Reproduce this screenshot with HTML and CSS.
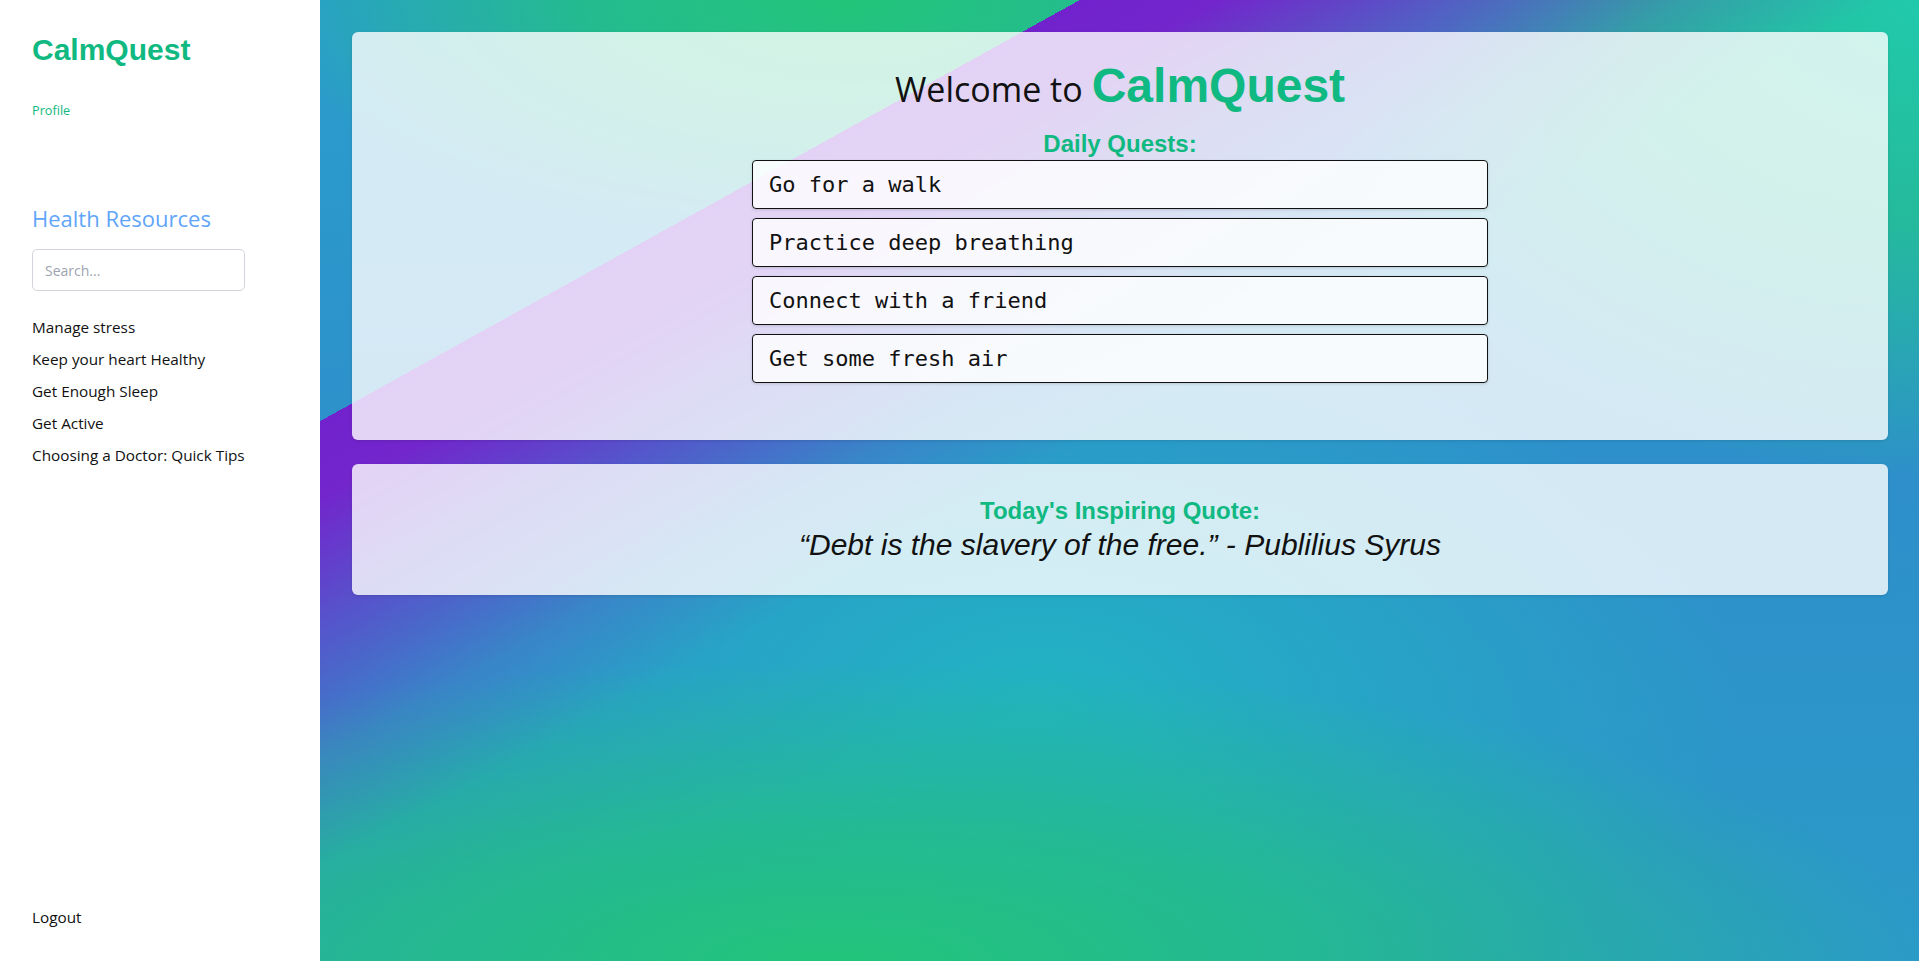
FILE: index.html
```html
<!DOCTYPE html>
<html lang="en">
<head>
<meta charset="utf-8">
<title>CalmQuest</title>
<link rel="stylesheet" href="styles.css">
</head>
<body>
<div class="app">
  <aside class="sidebar">
    <div class="brand">CalmQuest</div>
    <a class="profile" href="#">Profile</a>
    <h2 class="res-title">Health Resources</h2>
    <input class="search" type="text" placeholder="Search...">
    <ul class="res-list">
      <li><a href="#">Manage stress</a></li>
      <li><a href="#">Keep your heart Healthy</a></li>
      <li><a href="#">Get Enough Sleep</a></li>
      <li><a href="#">Get Active</a></li>
      <li><a href="#">Choosing a Doctor: Quick Tips</a></li>
    </ul>
    <a class="logout" href="#">Logout</a>
  </aside>
  <main class="main">
    <section class="card card-quests">
      <h1 class="title"><span class="welcome">Welcome to</span><span class="title-brand">CalmQuest</span></h1>
      <h2 class="subhead">Daily Quests:</h2>
      <ul class="quests">
        <li class="quest">Go for a walk</li>
        <li class="quest">Practice deep breathing</li>
        <li class="quest">Connect with a friend</li>
        <li class="quest">Get some fresh air</li>
      </ul>
    </section>
    <section class="card card-quote">
      <h2 class="subhead">Today's Inspiring Quote:</h2>
      <p class="quote">“Debt is the slavery of the free.” - Publilius Syrus</p>
    </section>
  </main>
</div>
</body>
</html>
```
FILE: styles.css
```css
* { box-sizing: border-box; }
html, body { margin: 0; padding: 0; height: 100%; }
body {
  font-family: "Open Sans", "Noto Sans", sans-serif;
  color: #111;
  overflow: hidden;
}
.app {
  display: flex;
  height: 100vh;
}
.sidebar {
  width: 320px;
  flex: 0 0 320px;
  background: #fff;
  display: flex;
  flex-direction: column;
  align-items: flex-start;
  padding: 32px 32px 34px 32px;
}
.brand {
  font-family: "Liberation Sans", Arial, sans-serif;
  font-weight: 700;
  font-size: 30px;
  line-height: 36px;
  color: #10b981;
}
.profile {
  margin-top: 34px;
  font-size: 12.7px;
  line-height: 17px;
  color: #10b981;
  text-decoration: none;
}
.res-title {
  margin: 84px 0 0 0;
  font-size: 22px;
  line-height: 30px;
  font-weight: 400;
  color: #60a5fa;
}
.search {
  margin-top: 16px;
  width: 213px;
  height: 42px;
  border: 1px solid #d4d4dc;
  border-radius: 5px;
  padding: 0 12px;
  font-family: "Open Sans", sans-serif;
  font-size: 14px;
  color: #111;
  background: #fff;
  outline: none;
}
.search::placeholder { color: #9ca3af; }
.res-list {
  list-style: none;
  margin: 20px 0 0 0;
  padding: 0;
}
.res-list li {
  line-height: 32px;
  font-size: 15.3px;
}
.res-list a, .logout {
  color: #111;
  text-decoration: none;
}
.logout {
  margin-top: auto;
  font-size: 15.3px;
  line-height: 20px;
}
.main {
  flex: 1;
  padding: 32px 31px 32px 32px;
  display: flex;
  flex-direction: column;
  gap: 24px;
  background:
    linear-gradient(151deg, rgba(114,34,204,0) 22.8%, #7222cc 22.8%, #7226cc 27%, rgba(112,44,204,0.6) 34%, rgba(100,70,200,0.25) 41%, rgba(90,90,200,0) 47%),
    radial-gradient(ellipse 580px 250px at 33% 0%, #22c57a 0%, rgba(34,197,122,0.75) 45%, rgba(34,197,122,0) 100%),
    radial-gradient(ellipse 620px 480px at 100% 0%, #21c9ab 0%, rgba(34,198,140,0.75) 45%, rgba(33,201,171,0) 100%),
    radial-gradient(ellipse 1100px 300px at 32% 100%, #22c47a 0%, rgba(34,196,122,0.65) 45%, rgba(34,196,122,0) 100%),
    radial-gradient(ellipse 700px 380px at 45% 72%, #22b2c4 0%, rgba(34,178,196,0) 100%),
    linear-gradient(180deg, #2a9ecc 0%, #2e8fca 50%, #2b9ac8 100%);
}
.card {
  background: rgba(255,255,255,0.8);
  border-radius: 6px;
  box-shadow: 0 1px 3px rgba(0,0,0,0.12);
  text-align: center;
}
.card-quests { padding: 30px 24px 57px; }
.card-quote { padding: 33px 24px 34px; }
.title {
  margin: 0;
  display: flex;
  justify-content: center;
  align-items: baseline;
  gap: 9px;
  font-weight: 400;
}
.welcome {
  font-family: "Open Sans", sans-serif;
  font-size: 34px;
  line-height: 34px;
  color: #111;
}
.title-brand {
  font-family: "Liberation Sans", Arial, sans-serif;
  font-weight: 700;
  font-size: 48px;
  line-height: 48px;
  color: #10b981;
}
.subhead {
  margin: 20px 0 0 0;
  font-family: "Liberation Sans", Arial, sans-serif;
  font-weight: 700;
  font-size: 24px;
  line-height: 28px;
  color: #10b981;
}
.card-quote .subhead { margin-top: 0; }
.quests {
  list-style: none;
  margin: 2px auto 0;
  padding: 0;
  width: 736px;
  display: flex;
  flex-direction: column;
  gap: 9px;
}
.quest {
  height: 49px;
  border: 1px solid #111;
  border-radius: 4px;
  background: rgba(255,255,255,0.8);
  box-shadow: 0 1px 3px rgba(0,0,0,0.15);
  padding: 0 16px;
  text-align: left;
  font-family: "DejaVu Sans Mono", "Liberation Mono", monospace;
  font-size: 22px;
  line-height: 47px;
  color: #111;
}
.quote {
  margin: 4px 0 0 0;
  font-family: "Liberation Sans", Arial, sans-serif;
  font-style: italic;
  font-size: 30px;
  line-height: 32px;
  color: #111;
}
```
